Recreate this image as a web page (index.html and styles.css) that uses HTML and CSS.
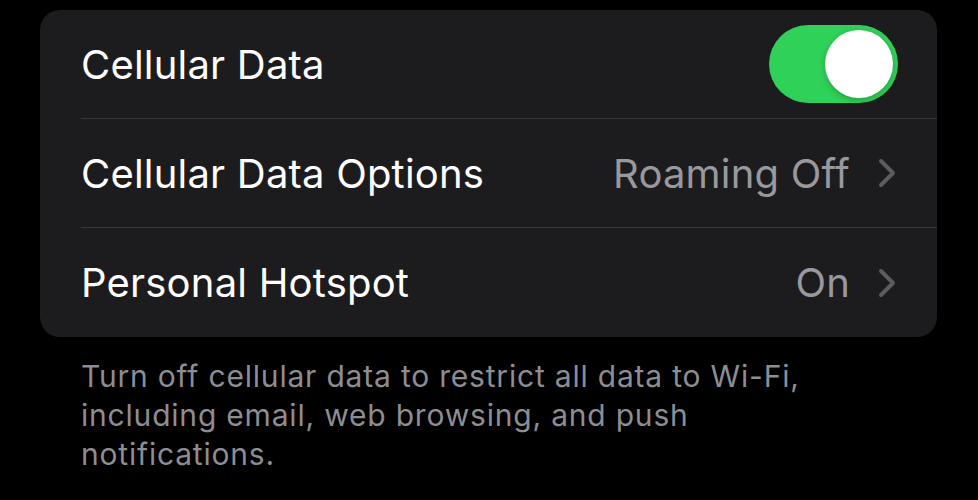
FILE: index.html
```html
<!DOCTYPE html>
<html lang="en">
<head>
    <meta charset="UTF-8">
    <meta name="viewport" content="width=device-width, initial-scale=1.0">
    <title>Cellular</title>
    <link rel="stylesheet" href="styles.css">
</head>
<body>
    <div class="group">
        <div class="row">
            <div class="row-inner">
                <span class="label">Cellular Data</span>
                <span class="toggle on"><span class="knob"></span></span>
            </div>
        </div>
        <div class="row">
            <div class="row-inner">
                <span class="label">Cellular Data Options</span>
                <span class="value">Roaming Off</span>
                <svg class="chevron" viewBox="0 0 18 30" width="18" height="30">
                    <path d="M3 3 L15 15 L3 27" />
                </svg>
            </div>
        </div>
        <div class="row">
            <div class="row-inner">
                <span class="label">Personal Hotspot</span>
                <span class="value">On</span>
                <svg class="chevron" viewBox="0 0 18 30" width="18" height="30">
                    <path d="M3 3 L15 15 L3 27" />
                </svg>
            </div>
        </div>
    </div>

    <p class="footer">
        Turn off cellular data to restrict all data to Wi-Fi,
        including email, web browsing, and push notifications.
    </p>
</body>
</html>
```

FILE: styles.css
```css
body {
    font-family: Inter, "Noto Sans", sans-serif;
    margin: 0;
    padding: 10px 41px 0 40px;
    background: #000;
    color: #fff;
}
.group {
    background: #1c1c1e;
    border-radius: 20px;
    overflow: hidden;
}
.row {
    padding-left: 41px;
}
.row-inner {
    display: flex;
    align-items: center;
    height: 108px;
    padding-right: 41px;
    border-bottom: 1px solid #38383a;
}
.row:last-child .row-inner {
    border-bottom: none;
    height: 109px;
}
.label {
    flex: 1;
    font-size: 40px;
    letter-spacing: 0.2px;
}
.value {
    font-size: 40px;
    color: #98989e;
    margin-right: 28px;
    letter-spacing: 0.2px;
}
.chevron {
    fill: none;
    stroke: #5b5b60;
    stroke-width: 4;
    stroke-linecap: round;
    stroke-linejoin: round;
}
.toggle {
    width: 129px;
    height: 78px;
    border-radius: 39px;
    background: #30d158;
    display: flex;
    align-items: center;
    justify-content: flex-end;
    padding: 0 5px;
    box-sizing: border-box;
    margin-right: -2px;
}
.knob {
    width: 68px;
    height: 68px;
    border-radius: 50%;
    background: #fff;
    box-shadow: 0 2px 6px rgba(0,0,0,0.25);
}
.footer {
    margin: 20px 0 0;
    padding: 0 60px 0 41px;
    font-size: 30px;
    line-height: 39px;
    color: #8d8d93;
    letter-spacing: 0.8px;
}
```
